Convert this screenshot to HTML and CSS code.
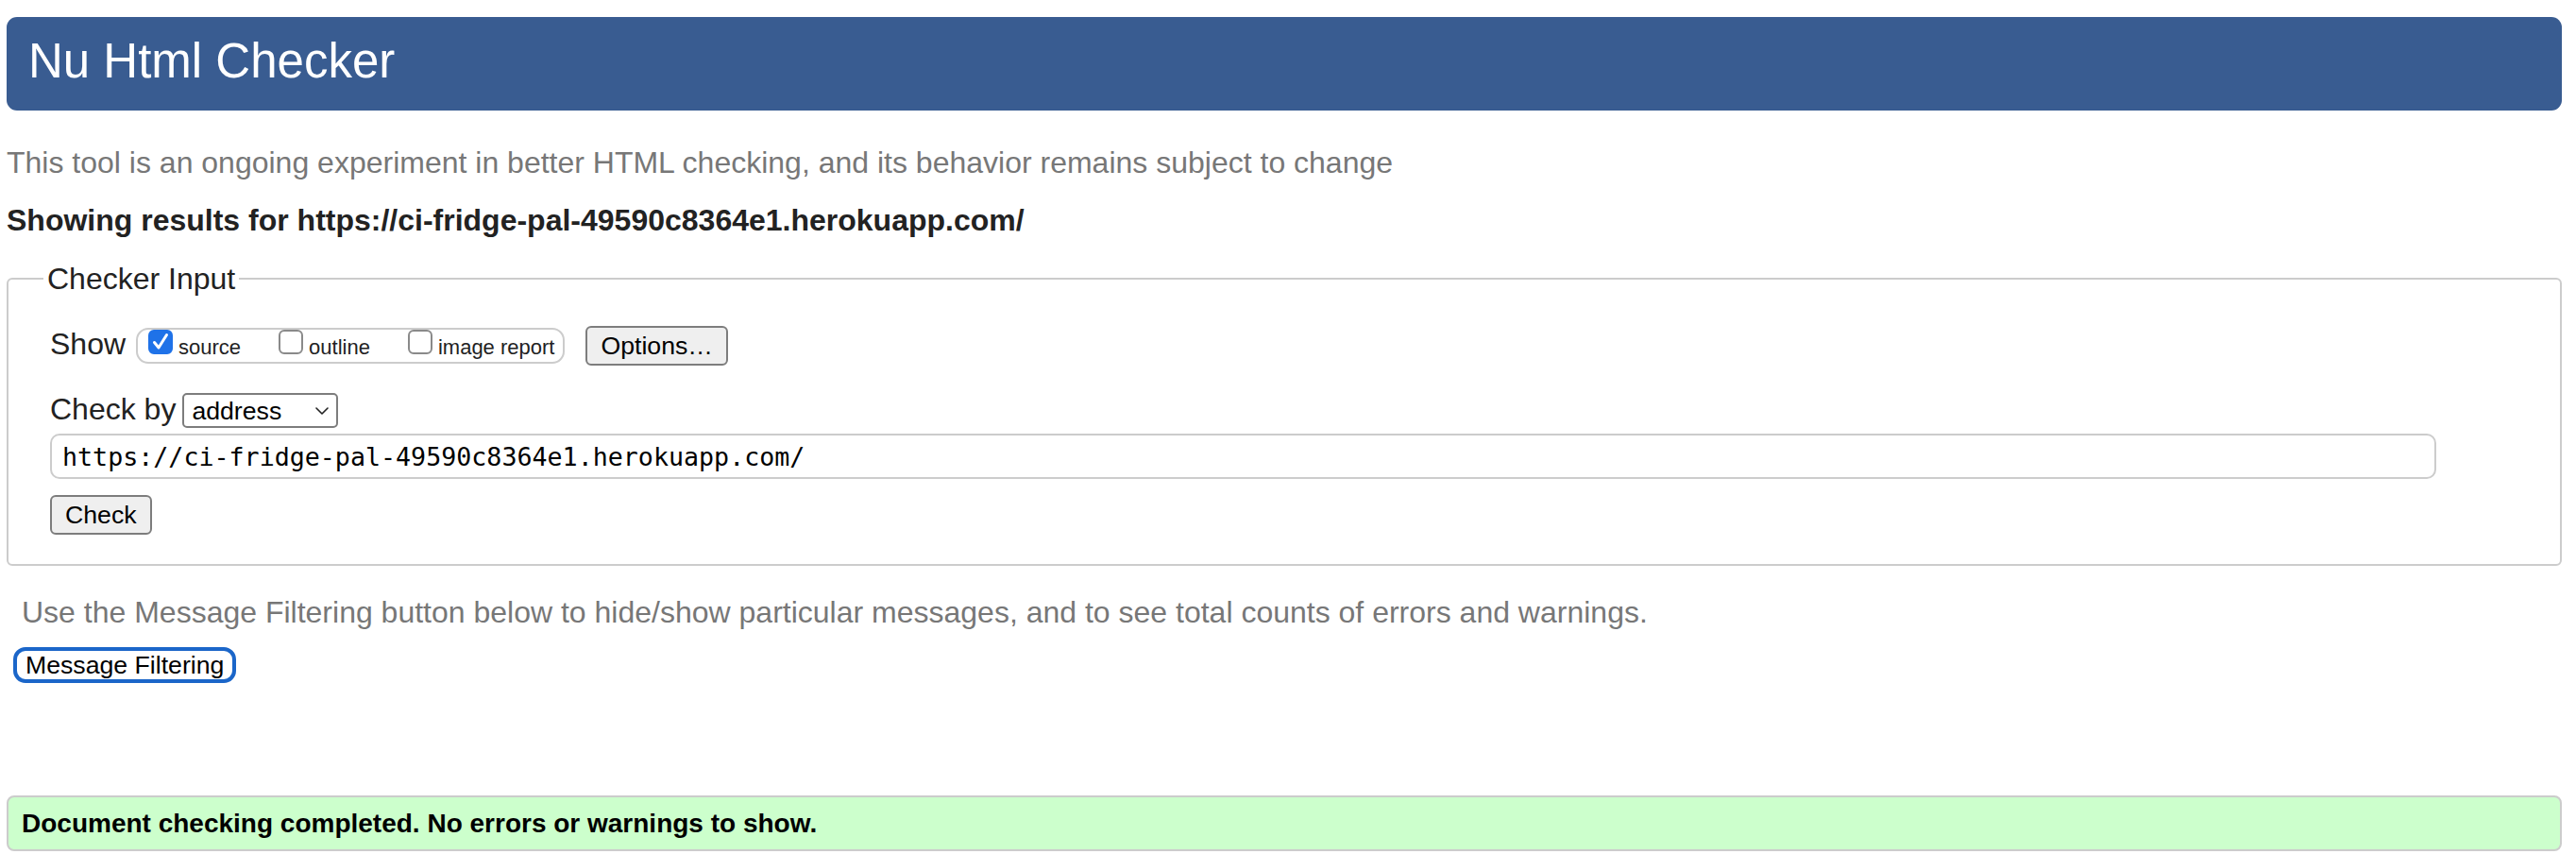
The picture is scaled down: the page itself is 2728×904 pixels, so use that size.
FILE: index.html
```html
<!DOCTYPE html>
<html lang="en">
<head>
<meta charset="utf-8">
<title>Nu Html Checker</title>
<link rel="stylesheet" href="styles.css">
</head>
<body>
<h1 class="title">Nu Html Checker</h1>
<p class="intro">This tool is an ongoing experiment in better HTML checking, and its behavior remains subject to change</p>
<p class="results-for">Showing results for https://ci-fridge-pal-49590c8364e1.herokuapp.com/</p>
<form class="checker-form">
  <fieldset class="checker-input">
    <legend class="legend">Checker Input</legend>
    <div class="row show-row">
      <span class="row-label show-label">Show</span>
      <span class="show-group">
        <label class="opt"><span class="box checked"><svg viewBox="0 0 26 26" width="26" height="26"><path d="M6.5 13.5 L11 19 L19.5 5.5" fill="none" stroke="#fff" stroke-width="3" stroke-linecap="round" stroke-linejoin="round"/></svg></span><span class="opt-text">source</span></label>
        <label class="opt"><span class="box"></span><span class="opt-text">outline</span></label>
        <label class="opt"><span class="box"></span><span class="opt-text">image report</span></label>
      </span>
      <button type="button" class="btn options-btn">Options…</button>
    </div>
    <div class="row checkby-row">
      <span class="row-label checkby-label">Check by</span>
      <span class="select-wrap">
        <select class="select"><option>address</option></select>
        <svg class="chevron" viewBox="0 0 14 8" width="14" height="8"><path d="M1 1 L7 7 L13 1" fill="none" stroke="#222" stroke-width="1.6" stroke-linecap="round" stroke-linejoin="round"/></svg>
      </span>
    </div>
    <input class="url-input" type="url" value="https://ci-fridge-pal-49590c8364e1.herokuapp.com/">
    <button type="button" class="btn check-btn">Check</button>
  </fieldset>
</form>
<p class="filter-hint">Use the Message Filtering button below to hide/show particular messages, and to see total counts of errors and warnings.</p>
<button type="button" class="filter-btn">Message Filtering</button>
<div class="status-ok">Document checking completed. No errors or warnings to show.</div>
</body>
</html>
```
FILE: styles.css
```css
* { box-sizing: border-box; }
html, body { background: #fff; }
body {
  margin: 0;
  padding: 18px 15px 0 7px;
  font-family: "Liberation Sans", Arial, sans-serif;
  color: #222;
}
.title {
  margin: 0;
  height: 99px;
  padding-left: 23px;
  background: #395c91;
  color: #fff;
  border-radius: 11px;
  font-size: 51px;
  font-weight: normal;
  line-height: 93px;
}
.intro {
  margin: 35px 0 0;
  font-size: 32px;
  line-height: 40px;
  color: #777;
}
.results-for {
  margin: 21px 0 0;
  font-size: 32px;
  line-height: 40px;
  font-weight: bold;
  color: #222;
}
.checker-form { margin: 25px 0 0; }
.checker-input {
  margin: 0;
  min-width: 0;
  padding: 33px 20px 31px 44px;
  border: 2px solid #ccc;
  border-radius: 6px;
}
.legend {
  font-size: 32px;
  line-height: 34px;
  padding: 0 4px;
  margin-left: -7px;
  color: #222;
}
.row { display: flex; align-items: center; }
.row-label { font-size: 32px; line-height: 36px; color: #222; }
.show-row { height: 42px; }
.show-label { margin-right: 11px; margin-bottom: 4px; }
.show-group {
  display: flex;
  align-items: flex-start;
  gap: 40px;
  height: 38px;
  padding: 0 9px 0 11px;
  border: 2px solid #ccc;
  border-radius: 13px;
  margin-right: 22px;
}
.opt { display: flex; align-items: baseline; }
.box {
  display: block;
  width: 26px;
  height: 26px;
  margin-right: 6px;
  border: 2px solid #8a8a8a;
  border-radius: 6px;
  background: #fff;
}
.box.checked { background: #1f72e8; border-color: #1f72e8; }
.box svg { display: block; margin: -2px; }
.opt-text { font-size: 22px; line-height: 22px; color: #222; }
.btn {
  font-family: "Liberation Sans", Arial, sans-serif;
  font-size: 26.67px;
  color: #000;
  background: #efefef;
  border: 2px solid #7d7d7d;
  border-radius: 6px;
  height: 42px;
  padding: 0 14px;
}
.checkby-row { margin-top: 29px; height: 37px; }
.checkby-label { margin-right: 7px; margin-bottom: 3px; }
.select-wrap { position: relative; display: block; width: 165px; height: 37px; }
.select {
  appearance: none;
  -webkit-appearance: none;
  width: 100%;
  height: 100%;
  padding: 0 0 0 8px;
  border: 2px solid #7d7d7d;
  border-radius: 5px;
  background: #fff;
  color: #000;
  font-family: "Liberation Sans", Arial, sans-serif;
  font-size: 26.67px;
}
.chevron { position: absolute; right: 10px; top: 15px; pointer-events: none; }
.url-input {
  display: block;
  margin-top: 6px;
  width: 2527px;
  height: 48px;
  padding: 0 11px;
  border: 2px solid #ccc;
  border-radius: 10px;
  background: #fff;
  color: #000;
  font-family: "DejaVu Sans Mono", "Liberation Mono", monospace;
  font-size: 26.67px;
}
.check-btn { display: block; margin-top: 17px; padding: 0 14px; }
.filter-hint {
  margin: 29px 0 0;
  padding-left: 16px;
  font-size: 32px;
  line-height: 40px;
  color: #777;
}
.filter-btn {
  display: block;
  margin: 17px 0 0 7px;
  height: 38px;
  padding: 0 9px;
  border: 4px solid #1b66c9;
  border-radius: 13px;
  background: #fff;
  color: #000;
  font-family: "Liberation Sans", Arial, sans-serif;
  font-size: 26.67px;
}
.status-ok {
  margin-top: 119px;
  height: 59px;
  padding-left: 14px;
  border: 2px solid #ccc;
  border-radius: 8px;
  background: #ccffcc;
  color: #000;
  font-size: 28px;
  font-weight: bold;
  line-height: 55px;
}
```
